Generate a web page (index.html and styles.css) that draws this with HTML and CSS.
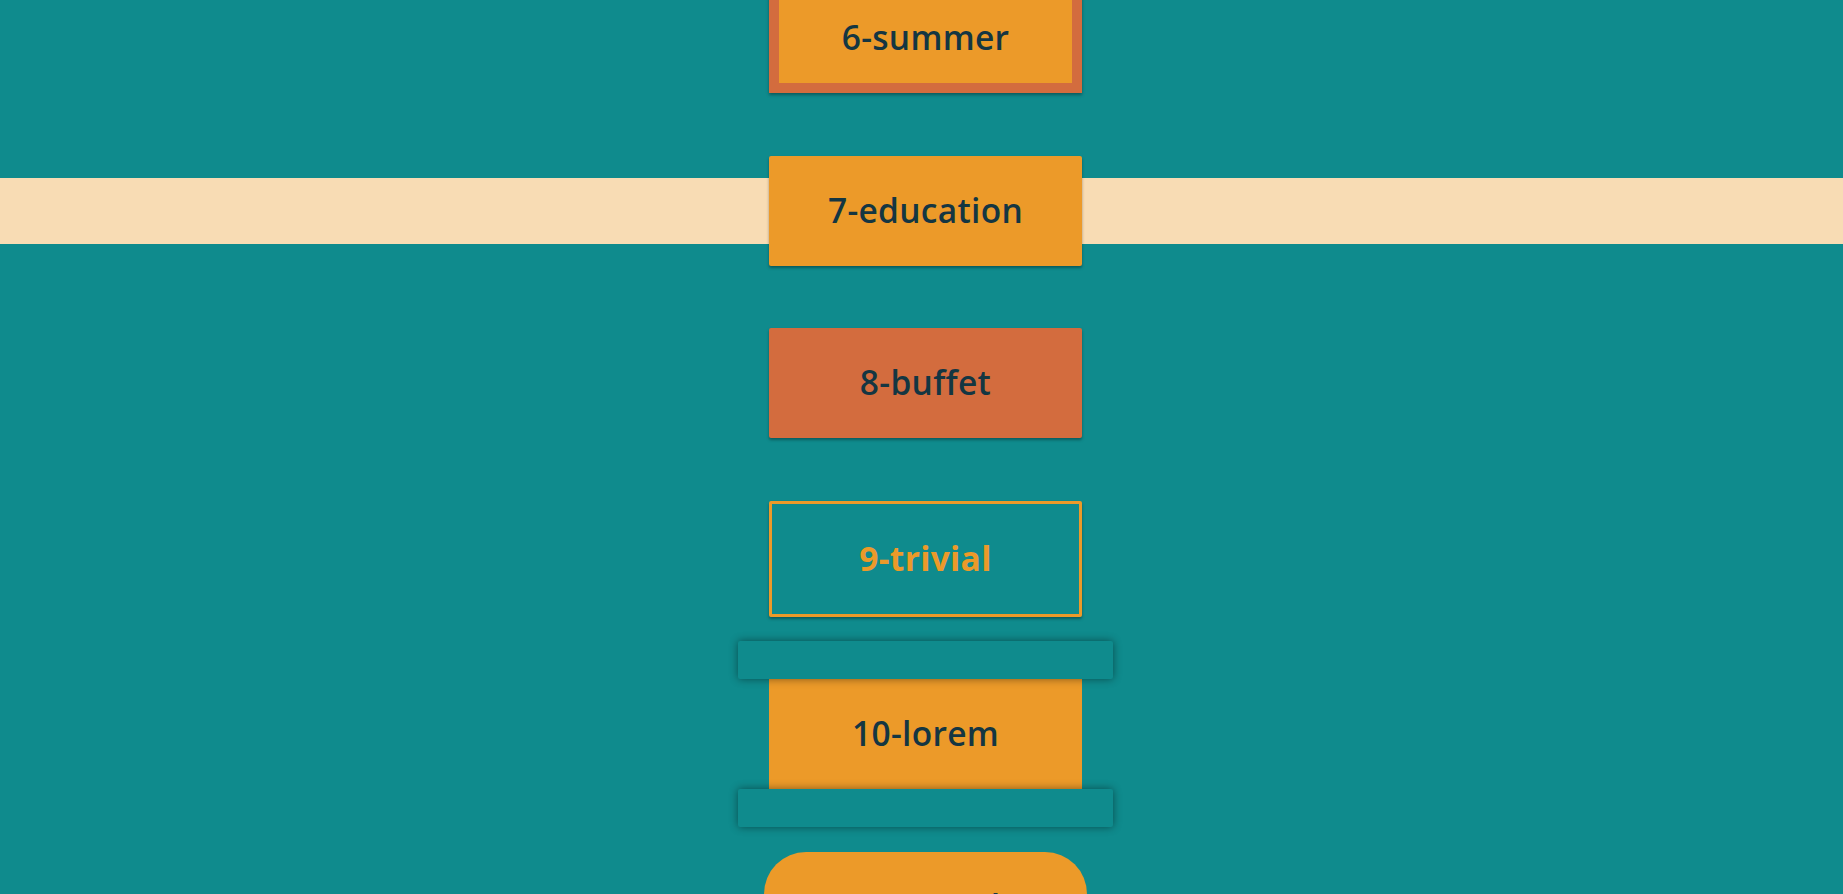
FILE: index.html
```html
<!DOCTYPE html>
<html lang="en">
<head>
<meta charset="utf-8">
<title>Buttons</title>
<link rel="stylesheet" href="styles.css">
</head>
<body>
<main class="list">
  <div class="btn btn-summer"><span>6-summer</span></div>
  <div class="band"><div class="btn btn-education"><span>7-education</span></div></div>
  <div class="btn btn-buffet"><span>8-buffet</span></div>
  <div class="btn btn-trivial"><span>9-trivial</span></div>
  <div class="btn btn-lorem"><span>10-lorem</span></div>
  <div class="btn btn-round"><span>11-round</span></div>
</main>
</body>
</html>
```

FILE: styles.css
```css
html, body {
  margin: 0;
  padding: 0;
}
body {
  background: #0f8b8d;
  font-family: "Open Sans", "Liberation Sans", sans-serif;
  overflow: hidden;
  height: 894px;
}
.list {
  display: flex;
  flex-direction: column;
  align-items: center;
  gap: 62.6px;
  margin-top: -17px;
  padding-left: 8px;
}
.band {
  align-self: stretch;
  margin-left: -8px;
  padding-left: 8px;
  display: flex;
  justify-content: center;
  background: linear-gradient(to bottom, transparent 22px, #f8dcb4 22px, #f8dcb4 88px, transparent 88px);
}
.btn {
  position: relative;
  box-sizing: border-box;
  width: 313px;
  height: 110px;
  display: flex;
  align-items: center;
  justify-content: center;
  background: #ec9a29;
  color: #143642;
  font-size: 33.5px;
  font-weight: 600;
  letter-spacing: 0.3px;
  border-radius: 2px;
  box-shadow: 0 2px 3px rgba(0, 0, 0, 0.35);
}
.btn span {
  position: relative;
  top: -1px;
  z-index: 2;
}
.btn-summer {
  border: 10px solid #d36c3e;
  border-radius: 0;
}
.btn-buffet {
  background: #d36c3e;
}
.btn-trivial {
  height: 116px;
  background: transparent;
  border: 3px solid #ec9a29;
  color: #ec9a29;
  font-weight: 700;
}
.btn-lorem {
  box-shadow: none;
  border-radius: 0;
}
.btn-lorem::before,
.btn-lorem::after {
  content: "";
  position: absolute;
  left: -31px;
  right: -31px;
  height: 38px;
  background: #0f8b8d;
  border-radius: 2px;
  box-shadow: 0 0 8px rgba(0, 0, 0, 0.45);
  z-index: 1;
}
.btn-lorem::before {
  top: -38px;
}
.btn-lorem::after {
  bottom: -38px;
}
.btn-round {
  width: 323px;
  border-radius: 42px;
  box-shadow: none;
}
```
